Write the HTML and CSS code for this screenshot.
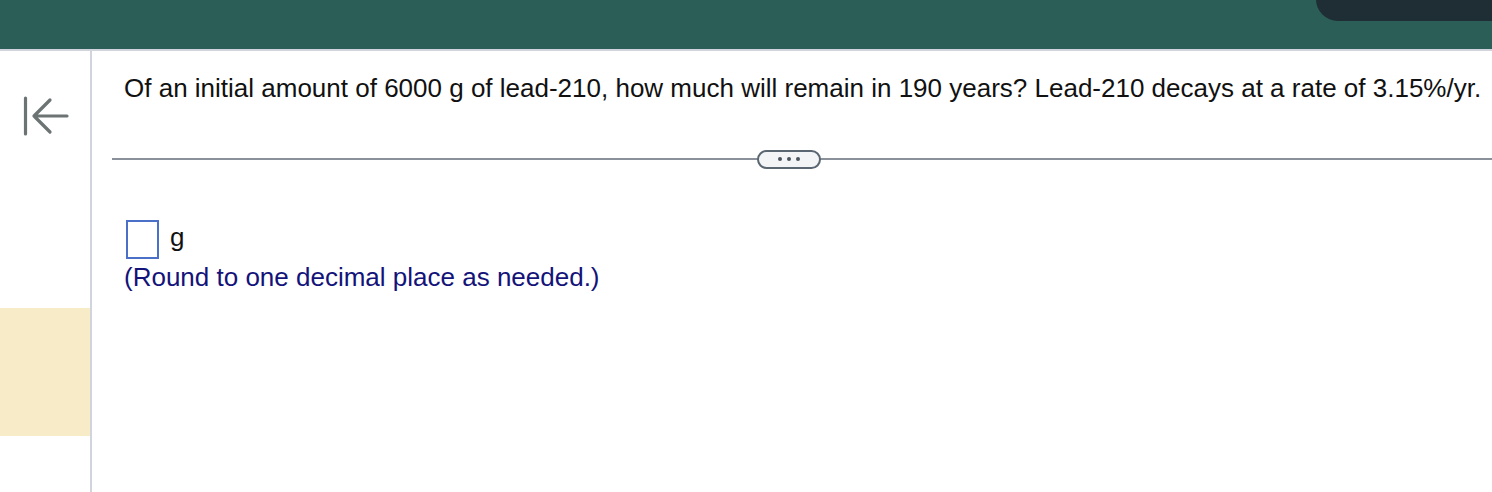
FILE: index.html
```html
<!DOCTYPE html>
<html>
<head>
<meta charset="utf-8">
<link rel="stylesheet" href="styles.css">
</head>
<body>
<header class="topbar">
  <div class="pill"></div>
</header>
<div class="main">
  <aside class="sidebar">
    <div class="collapse">
      <svg width="50" height="44" viewBox="0 0 50 44">
        <path d="M25.5 4 V40" stroke="#6c7373" stroke-width="3.2" fill="none" stroke-linecap="round"/>
        <path d="M67 22 H34 M50 6 L34 22 L50 38" stroke="#6c7373" stroke-width="3.2" fill="none" stroke-linecap="round" stroke-linejoin="round"/>
      </svg>
    </div>
    <div class="highlight"></div>
  </aside>
  <section class="content">
    <p class="question">Of an initial amount of 6000 g of lead-210, how much will remain in 190 years? Lead-210 decays at a rate of 3.15%/yr.</p>
    <div class="divider">
      <button class="more"><span></span><span></span><span></span></button>
    </div>
    <div class="answer">
      <span class="box"></span><span class="unit">g</span>
    </div>
    <p class="hint">(Round to one decimal place as needed.)</p>
  </section>
</div>
</body>
</html>
```
FILE: styles.css
```css
* { box-sizing: border-box; }
html, body { margin: 0; padding: 0; background: #fff; }
body {
  width: 1492px;
  height: 492px;
  overflow: hidden;
  font-family: "Liberation Sans", Arial, sans-serif;
}
.topbar {
  height: 49px;
  background: #2b5e56;
  border-bottom: 2px solid #d1d4dc;
  box-sizing: content-box;
  position: relative;
}
.pill {
  position: absolute;
  left: 1316px;
  top: -30px;
  width: 220px;
  height: 51px;
  border-radius: 22px;
  background: #1f2d35;
}
.main {
  display: flex;
  height: 441px;
}
.sidebar {
  width: 92px;
  flex: none;
  border-right: 2px solid #d1d4dc;
  display: flex;
  flex-direction: column;
}
.collapse {
  height: 257px;
  padding-top: 43px;
}
.collapse svg { display: block; overflow: visible; }
.highlight {
  height: 128px;
  background: #f8ecc8;
}
.content {
  flex: 1;
  padding-left: 20px;
}
.question {
  margin: 22px 0 0 12px;
  font-size: 26px;
  line-height: 30px;
  color: #111;
  white-space: nowrap;
}
.divider {
  margin-top: 47px;
  height: 18px;
  display: flex;
  align-items: center;
  justify-content: center;
  position: relative;
}
.divider::before {
  content: "";
  position: absolute;
  left: 0; right: 0; top: 8px;
  height: 2px;
  background: #8a919a;
}
.more {
  position: relative;
  width: 64px;
  height: 19px;
  margin-right: 27px;
  border: 2px solid #5a6772;
  border-radius: 10px;
  background: #f3f4f6;
  display: flex;
  align-items: center;
  justify-content: center;
  gap: 5px;
  padding: 0;
}
.more span {
  width: 4px; height: 4px;
  border-radius: 50%;
  background: #4a545c;
}
.answer {
  margin-top: 52px;
  margin-left: 14px;
  display: flex;
  align-items: center;
  height: 39px;
}
.box {
  width: 33px;
  height: 39px;
  border: 2px solid #4a70c8;
  background: #fff;
}
.unit {
  font-size: 26px;
  color: #111;
  margin-left: 11px;
  margin-top: -4px;
}
.hint {
  margin: 3px 0 0 12px;
  font-size: 26px;
  line-height: 30px;
  color: #13137a;
}
```
